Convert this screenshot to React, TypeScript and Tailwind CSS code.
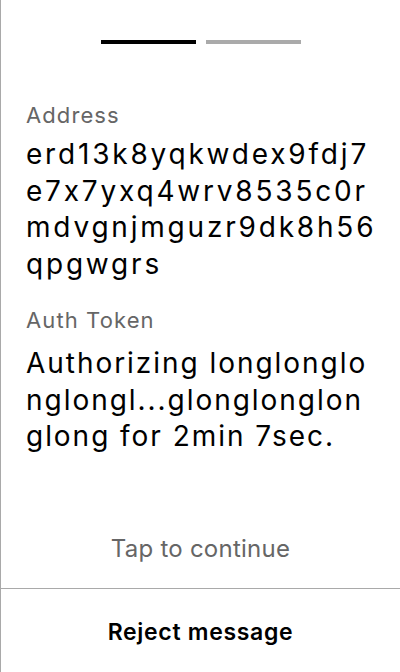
export default function App() {
  const steps = [true, false]

  return (
    <div
      className="h-[672px] w-full bg-white border-l border-[#a9a9a9] flex flex-col text-black [font-feature-settings:'calt'_0]"
      style={{ fontFamily: 'Inter, "Noto Sans", sans-serif' }}
    >
      <div className="flex justify-center gap-[10px] pt-10">
        {steps.map((active, i) => (
          <div key={i} className={`w-[95px] h-1 ${active ? 'bg-black' : 'bg-[#aaaaaa]'}`} />
        ))}
      </div>

      <div className="pl-[25px] pr-[18px] pt-[58px] flex flex-col">
        <div className="text-[22px] leading-[26px] tracking-[0.05em] text-[#666666]">Address</div>
        <div className="text-[28px] leading-[36.7px] tracking-[0.1em] mt-[8px] break-all">
          erd13k8yqkwdex9fdj7e7x7yxq4wrv8535c0rmdvgnjmguzr9dk8h56qpgwgrs
        </div>
        <div className="text-[22px] leading-[26px] tracking-[0.05em] text-[#666666] mt-6">Auth Token</div>
        <div className="text-[28px] leading-[36.7px] tracking-[0.07em] mt-[12px] break-all">
          Authorizing longlonglonglongl...glonglonglonglong for 2min 7sec.
        </div>
      </div>

      <div className="flex-1 flex items-end justify-center pb-[25px]">
        <button className="text-[24px] leading-[29px] tracking-[0.01em] text-[#666666]">Tap to continue</button>
      </div>

      <button className="border-t border-[#a9a9a9] h-[84px] pt-[3px] text-[23px] font-semibold tracking-[0.03em]">
        Reject message
      </button>
    </div>
  )
}
